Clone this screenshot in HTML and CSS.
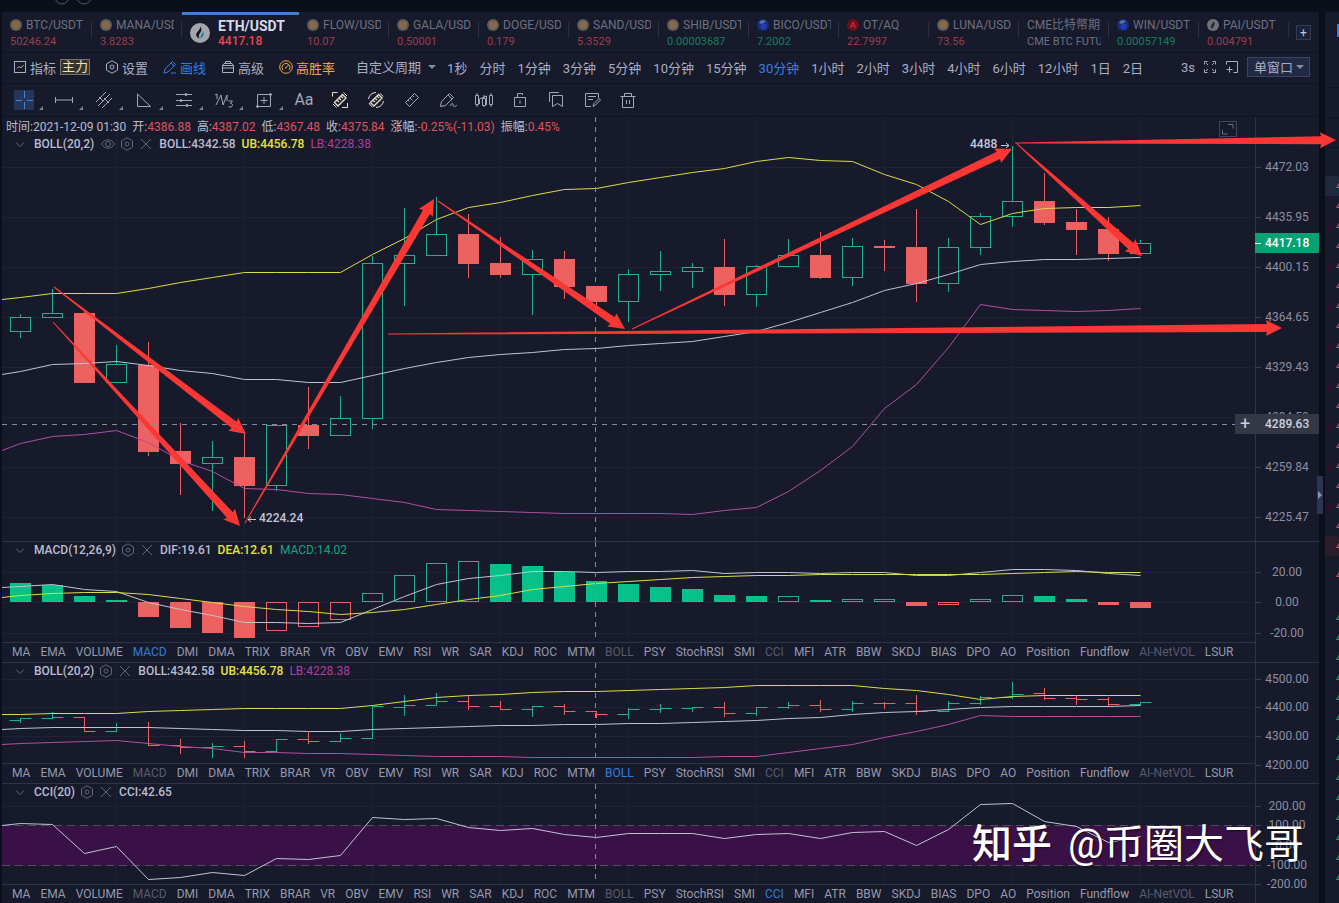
FILE: index.html
```html
<!DOCTYPE html>
<html lang="zh-CN">

<head>
    <meta charset="UTF-8">
    <meta name="viewport" content="width=device-width, initial-scale=1.0">
    <title>ETH/USDT 4417.18</title>
    <link rel="stylesheet" href="styles.css">
</head>

<body>
    <header class="topbar">
        <svg width="200" height="12" fill="none" stroke="#555a6c">
            <circle cx="62" cy="-3" r="7" />
            <circle cx="84" cy="-3" r="7" />
        </svg>
    </header>

    <div class="workspace">
        <main class="panel">
            <nav class="symbols" id="symbols"></nav>

            <div class="toolbar">
                <button class="tool"><svg class="icon" viewBox="0 0 14 14">
                        <rect x="1.500" y="1.500" width="11" height="11" />
                        <path d="M4 8.500l2-2 2 1.500 2.500-3" />
                    </svg>指标<span class="badge">主力</span></button>
                <button class="tool"><svg class="icon" viewBox="0 0 14 14">
                        <path d="M7 .8l5.500 3.100v6.200L7 13.200 1.500 10.100V3.900z" />
                        <circle cx="7" cy="7" r="2" />
                    </svg>设置</button>
                <button class="tool active"><svg class="icon" viewBox="0 0 14 14">
                        <path d="M1 13l1-4 7.500-7.500 3 3L5 12zM8 3l3 3M8 13h5" />
                    </svg>画线</button>
                <button class="tool"><svg class="icon" viewBox="0 0 14 14">
                        <path d="M1.500 5.500h11v7h-11zM1.500 5.500l1.500-2h8l1.500 2M4.500 3.500v-2h5v2M1.500 8h11" />
                    </svg>高级</button>
                <button class="tool gold"><svg class="icon" viewBox="0 0 14 14">
                        <circle cx="7" cy="7" r="6.300" />
                        <path d="M4 10a4 4 0 1 1 6 0M6.500 8L9.500 5M6 8h1.500" />
                    </svg>高胜率</button>
                <label class="dropdown custom"><select aria-label="自定义周期">
                        <option>自定义周期</option>
                    </select></label>
                <div class="periods" id="periods"></div>
                <div class="tools-right">
                    <span class="delay">3s</span>
                    <button class="plain" aria-label="全屏"><svg class="icon" viewBox="0 0 14 14">
                            <path d="M1.500 4.500v-3h3M9.500 1.500h3v3M12.500 9.500v3h-3M4.500 12.500h-3v-3M3 3l2 2M11 3L9 5M11 11L9 9M3 11l2-2" />
                        </svg></button>
                    <button class="plain" aria-label="新窗口"><svg class="icon" viewBox="0 0 14 14">
                            <path d="M1.500 4.500v-3h11v11h-4M4.500 6.500v6M1.500 9.500h6" />
                        </svg></button>
                    <label class="dropdown window"><select aria-label="窗口">
                            <option>单窗口</option>
                        </select></label>
                </div>
            </div>

            <div class="draw-tools" id="drawTools"></div>

            <section class="pane main-pane" data-pane="main">
                <div class="plot">
                    <svg class="chart" height="424"></svg>
                    <div class="legend">
                        <div class="legend-row quote">
                            <span>时间:2021-12-09 01:30</span>
                            <span>开:<b>4386.88</b></span>
                            <span>高:<b>4387.02</b></span>
                            <span>低:<b>4367.48</b></span>
                            <span>收:<b>4375.84</b></span>
                            <span>涨幅:<b>-0.25%(-11.03)</b></span>
                            <span>振幅:<b>0.45%</b></span>
                        </div>
                        <div class="legend-row" data-name="BOLL(20,2)" data-eye="1">
                            <span>BOLL:4342.58</span><span class="ub">UB:4456.78</span><span class="lb">LB:4228.38</span>
                        </div>
                    </div>
                    <button class="expand" aria-label="展开"><svg class="icon" viewBox="0 0 18 16">
                            <path d="M.5 15.500V.5h17v15z" opacity=".5" />
                            <path d="M9 3.500h5v4M3.500 9v4h5" />
                        </svg></button>
                </div>
                <div class="axis"><svg height="424"></svg></div>
                <div class="cross-price"><button aria-label="添加">+</button><span>4289.63</span></div>
                <div class="last-price">4417.18</div>
            </section>

            <section class="pane" data-pane="macd" data-active="MACD">
                <div class="plot">
                    <svg class="chart" height="100"></svg>
                    <div class="legend">
                        <div class="legend-row" data-name="MACD(12,26,9)">
                            <span>DIF:19.61</span><span class="ub">DEA:12.61</span><span class="up">MACD:14.02</span>
                        </div>
                    </div>
                </div>
                <div class="axis"><svg height="120"></svg></div>
                <div class="indicators"></div>
            </section>

            <section class="pane" data-pane="boll" data-active="BOLL">
                <div class="plot">
                    <svg class="chart" height="100"></svg>
                    <div class="legend">
                        <div class="legend-row" data-name="BOLL(20,2)">
                            <span>BOLL:4342.58</span><span class="ub">UB:4456.78</span><span class="lb">LB:4228.38</span>
                        </div>
                    </div>
                </div>
                <div class="axis"><svg height="120"></svg></div>
                <div class="indicators"></div>
            </section>

            <section class="pane" data-pane="cci" data-active="CCI">
                <div class="plot">
                    <svg class="chart" height="100"></svg>
                    <div class="legend">
                        <div class="legend-row" data-name="CCI(20)"><span>CCI:42.65</span></div>
                    </div>
                </div>
                <div class="axis"><svg height="120"></svg></div>
                <div class="indicators"></div>
            </section>
        </main>

        <aside class="book">
            <div class="book-head"><i></i></div>
            <div class="book-row"></div>
            <div class="book-row"></div>
            <ul id="book"></ul>
        </aside>

        <button class="handle" aria-label="收起"></button>
        <svg class="arrows" id="arrows"></svg>
        <div class="watermark"><strong>知乎</strong><span>@币圈大飞哥</span></div>
    </div>

    <script src="chart.js"></script>
</body>

</html>
```

FILE: styles.css
```css
* {
    box-sizing: border-box;
}

body {
    margin: 0;
    height: 100vh;
    overflow: hidden;
    background: #0b0f1a;
    color: #c3c7da;
    font-family: Roboto, "Noto Sans CJK SC", sans-serif;
    font-size: 12px;
}

button,
select {
    margin: 0;
    padding: 0;
    border: none;
    background: none;
    color: inherit;
    font: inherit;
    cursor: pointer;
}

svg {
    display: block;
}

.icon {
    width: 14px;
    height: 14px;
    fill: none;
    stroke: currentColor;
    stroke-width: 1;
}

.topbar {
    height: 12px;
    overflow: hidden;
}

.workspace {
    position: relative;
    display: grid;
    grid-template-columns: minmax(0, 1fr) 14px;
    column-gap: 6px;
    padding-left: 2px;
    overflow: hidden;
    height: calc(100vh - 12px);
}

.panel,
.book {
    background: #171a2b;
    min-width: 0;
}

/* symbols */
.symbols {
    display: flex;
    height: 41px;
    border-bottom: 1px solid #0f1220;
}

.symbol {
    position: relative;
    width: 90px;
    padding: 5px 8px 0;
    color: #6d7080;
    text-decoration: none;
}

.symbol::after {
    content: "";
    position: absolute;
    right: 0;
    top: 10px;
    width: 1px;
    height: 16px;
    background: #2c3042;
}

.symbol-name {
    display: flex;
    align-items: center;
    gap: 4px;
    height: 16px;
    line-height: 16px;
    overflow: hidden;
    white-space: nowrap;
}

.symbol-name svg {
    flex: none;
}

.symbol-name span {
    overflow: hidden;
}

.symbol-price {
    font-size: 11px;
    line-height: 18px;
    color: #9b3f4b;
    overflow: hidden;
    white-space: nowrap;
}

.symbol-price.green {
    color: #15805f;
}

.symbol-price.gray {
    color: #6d7080;
}

.symbol.current {
    display: flex;
    align-items: center;
    gap: 8px;
    width: 117px;
    padding: 0 8px 2px;
    border-top: 3px solid #3f7fd0;
    color: #d5d9ea;
}

.symbol.current::after {
    display: none;
}

.symbol.current .symbol-name {
    font-size: 14px;
    font-weight: 700;
}

.symbol.current .symbol-price {
    font-size: 12px;
    line-height: 14px;
    font-weight: 500;
    color: #f0444f;
}

.add-symbol {
    width: 15px;
    height: 15px;
    margin: 13px 0 0 7px;
    border: 1px solid #343b54;
    background: #1b2136;
    line-height: 12px;
}

/* toolbar */
.toolbar {
    display: flex;
    align-items: center;
    gap: 15px;
    height: 31px;
    padding: 0 9px 2px 11px;
    border-bottom: 1px solid #0f1220;
    font-size: 13px;
    white-space: nowrap;
    color: #a9aec4;
}

.tool {
    display: flex;
    align-items: center;
    gap: 3px;
}

.tool.active,
.periods .active {
    color: #2f7fe6;
}

.tool.gold {
    color: #f0a63c;
}

.badge {
    height: 16px;
    margin-left: 1px;
    padding: 0 1px;
    border: 1px solid #77736c;
    background: #37342f;
    color: #f2e0bd;
    line-height: 13px;
}

.dropdown {
    display: flex;
    align-items: center;
    gap: 6px;
    margin-left: 6px;
}

.dropdown select {
    appearance: none;
}

.dropdown::after {
    content: "";
    border: 4px solid transparent;
    border-top-color: #868ca3;
    border-bottom: none;
}

.periods {
    display: flex;
    gap: 12px;
    margin-left: -4px;
}

.tools-right {
    display: flex;
    align-items: center;
    gap: 8px;
    margin-left: auto;
}

.dropdown.window {
    gap: 2px;
    height: 20px;
    margin: 0;
    padding: 0 5px 0 6px;
    border: 1px solid #3b4360;
    background: #222944;
}

/* drawing tools */
.draw-tools {
    display: flex;
    align-items: center;
    gap: 16px;
    height: 33px;
    padding-left: 12px;
    border-bottom: 1px solid #0f1220;
    color: #a3a7ba;
}

.draw-tools button {
    position: relative;
    width: 20px;
    height: 20px;
    font-size: 16px;
    line-height: 20px;
}

.draw-tools svg {
    width: 20px;
    height: 20px;
}

.draw-tools .has-menu {
    margin-right: 4px;
}

.draw-tools .has-menu::after {
    content: "";
    position: absolute;
    left: 25px;
    bottom: 0;
    border: 2px solid transparent;
    border-right-color: #7d8194;
    border-bottom-color: #7d8194;
}

.draw-tools .active {
    background: #26355a;
    color: #3f82e0;
}

.draw-tools .gold {
    color: #eadfca;
}

/* chart panes */
.pane {
    position: relative;
    display: grid;
    grid-template-columns: minmax(0, 1fr) 64px;
    border-top: 1px solid #2f3347;
}

.main-pane {
    border-top: none;
}

.plot {
    position: relative;
    min-width: 0;
}

.chart {
    width: 100%;
}

.axis {
    grid-row: span 2;
    border-left: 1px solid #2f3347;
    overflow: hidden;
}

.main-pane .axis {
    grid-row: auto;
}

.axis svg {
    width: 100%;
}

.axis text {
    fill: #8b8fa3;
    text-anchor: middle;
}

.legend {
    position: absolute;
    left: 0;
    top: -1px;
}

.main-pane .legend {
    top: 0;
}

.legend-row {
    display: flex;
    align-items: center;
    gap: 5px;
    height: 18px;
    padding-left: 12px;
    font-weight: 500;
    white-space: nowrap;
    color: #b9bdd1;
}

.legend-row.quote {
    gap: 6px;
    padding: 0 0 2px 4px;
    font-weight: 400;
}

.legend-row b {
    font-weight: 400;
    color: #e0525e;
}

.legend-row .icon {
    color: #626679;
}

.legend-row .eye {
    margin-left: 2px;
}

.legend-row .name {
    margin-left: 1px;
}

.legend-row .close {
    margin-right: 1px;
}

.legend-row .ub,
.legend-row .lb,
.legend-row .up {
    margin-left: 1px;
}

.ub {
    color: #e6e33f;
}

.lb {
    font-weight: 400;
    color: #b13fa0;
}

.up {
    font-weight: 400;
    color: #17a57a;
}

.expand {
    position: absolute;
    right: 18px;
    top: 4px;
    width: 18px;
    height: 16px;
    color: #6b7084;
}

.expand .icon {
    width: 18px;
    height: 16px;
}

.indicators {
    display: flex;
    gap: 10px;
    height: 20px;
    padding: 0 0 2px 10px;
    border-top: 1px solid #2f3347;
    overflow: hidden;
    white-space: nowrap;
    color: #9499ac;
}

.indicators .used {
    color: #585c6d;
}

.indicators .active {
    color: #2f7ddb;
}

.cross-price,
.last-price {
    position: absolute;
    right: 0;
    height: 20px;
    line-height: 20px;
    font-weight: 500;
}

.cross-price {
    top: 297px;
    display: flex;
    width: 84px;
    gap: 14px;
    padding-left: 4px;
    background: #343845;
    color: #ccd0e0;
}

.cross-price button {
    width: 12px;
    font-size: 18px;
    font-weight: 400;
    line-height: 18px;
}

.last-price {
    top: 116px;
    width: 64px;
    padding-left: 10px;
    background: #08a173;
    color: #fff;
}

.last-price::before {
    content: "";
    position: absolute;
    left: 0;
    top: 10px;
    width: 6px;
    height: 1px;
    background: #fff;
}

/* order book */
.book {
    overflow: hidden;
}

.book-head {
    height: 76px;
    padding: 12px 0 0 12px;
    border-bottom: 1px solid #0f1220;
}

.book-head i {
    display: block;
    height: 13px;
    background: #2f7fe6;
}

.book-row {
    height: 30px;
    border-bottom: 1px solid #0f1220;
}

.book ul {
    margin: 28px 0 0;
    padding: 0;
    list-style: none;
}

.book li {
    height: 20px;
    padding-left: 11px;
    line-height: 20px;
    color: #e0525e;
}

.book li.buy {
    color: #17a57a;
}

.book li.hover {
    background: #20283d;
}

.book li.deal {
    margin-bottom: 9px;
    background: #2c1d2b;
}

.book li.last {
    margin-bottom: 23px;
}

/* overlays */
.handle {
    position: absolute;
    right: 16px;
    top: 464px;
    width: 6px;
    height: 38px;
    background: #2c3550;
}

.handle::after {
    content: "";
    position: absolute;
    left: 1px;
    top: 15px;
    border: 4px solid transparent;
    border-left-color: #8b93ad;
    border-right: none;
}

.arrows {
    position: absolute;
    left: 0;
    top: 0;
    width: 100%;
    height: 100%;
    fill: #fa3735;
    pointer-events: none;
}

.watermark {
    position: absolute;
    right: 35px;
    bottom: 30px;
    display: flex;
    gap: 16px;
    font-size: 40px;
    line-height: 56px;
    color: #fff;
    text-shadow: 1px 1px 2px rgba(0, 0, 0, 0.5);
    pointer-events: none;
}

.watermark strong {
    font-weight: 500;
}
```

FILE: chart.js
```js
const $ = (s, root = document) => root.querySelector(s)

// ---------- symbol tabs ----------
const symbols = [
    ["BTC/USDT", "50246.24", "coin"],
    ["MANA/USDT", "3.8283", "coin"],
    ["ETH/USDT", "4417.18", "eth"],
    ["FLOW/USDT", "10.07", "coin"],
    ["GALA/USDT", "0.50001", "coin"],
    ["DOGE/USDT", "0.179", "coin"],
    ["SAND/USDT", "5.3529", "coin"],
    ["SHIB/USDT", "0.00003687", "coin", "green"],
    ["BICO/USDT", "7.2002", "blue", "green"],
    ["OT/AQ", "22.7997", "red"],
    ["LUNA/USDT", "73.56", "coin"],
    ["CME比特幣期貨", "CME BTC FUTURES", "", "gray"],
    ["WIN/USDT", "0.00057149", "blue", "green"],
    ["PAI/USDT", "0.004791", "gray"]
]

const logos = {
    coin: '<circle cx="6" cy="6" r="6" fill="#5f5b5a"/><circle cx="6" cy="6" r="4" fill="#85694a"/>',
    blue: '<circle cx="6" cy="6" r="6" fill="#1b2c7c"/><path d="M2 3.500a5 5 0 0 1 7-1.500L7 4 4 5z" fill="#50789a"/><circle cx="6.500" cy="7.500" r="3" fill="#1f3fc0"/>',
    red: '<circle cx="6" cy="6" r="6" fill="#6e0f1c"/><path d="M3.500 9L6 3l2.500 6M4.500 7h3" stroke="#c9343f" fill="none"/>',
    gray: '<circle cx="6" cy="6" r="6" fill="#6f7276"/><path d="M6 2c2 2 2 3 1 5s-2 2-2 3c-2-2-1-4 0-5s1-2 1-3z" fill="#24283a"/>'
}

const ethLogo = `<svg width="20" height="20"><circle cx="10" cy="10" r="10" fill="#a3a5a8"/>
<path d="M10 3.500c2.500 2.500 1.500 4.500 0 6.500s-1.500 3.500-.5 5.500C6 14 5.500 11.500 7 9.500s3.500-3.500 3-6z" fill="#14161f"/>
<path d="M13 8c1.500 3 .5 6-2.500 7.500-.5-3 2-4 2.500-7.500z" fill="#2173a8"/></svg>`

$("#symbols").innerHTML = symbols.map(([name, price, logo, tone = ""]) => {
    if (logo == "eth") {
        return `<a href="#" class="symbol current">${ethLogo}<div><div class="symbol-name">${name}</div><div class="symbol-price">${price}</div></div></a>`
    }
    const icon = logo ? `<svg width="12" height="12">${logos[logo]}</svg>` : ""
    return `<a href="#" class="symbol"><div class="symbol-name">${icon}<span>${name}</span></div><div class="symbol-price ${tone == "green" || !logo ? tone : ""}">${price}</div></a>`
}).join("") + '<button class="add-symbol" aria-label="添加">+</button>'

// ---------- periods ----------
const periods = "1秒 分时 1分钟 3分钟 5分钟 10分钟 15分钟 30分钟 1小时 2小时 3小时 4小时 6小时 12小时 1日 2日".split(" ")
$("#periods").innerHTML = periods.map(p => `<button class="${p == "30分钟" ? "active" : ""}">${p}</button>`).join("")

// ---------- drawing tools ----------
const ruler = '<path d="M3.500 12.500l9-9 4 4-9 9zM6 10l1.500 1.500M8 8l2.500 2.500M10.500 5.500L12 7"/>'
const drawTools = [
    ["十字光标", "active has-menu", '<path d="M10.500 1v7M10.500 12v7M2 10.500h6M13 10.500h6"/>'],
    ["线段", "has-menu", '<path d="M1.500 7v6M18.500 7v6M1.500 10h17"/>'],
    ["平行线", "has-menu", '<path d="M2 12L12 2M4 16L16 4M8 18L18 8M5 7l4 4M10 8l5 5"/>'],
    ["三角形", "has-menu", '<path d="M3.500 4v12.500h13z"/>'],
    ["斐波那契", "has-menu", '<path d="M2 4.500h16M2 10.500h16M2 15.500h16"/><circle cx="12" cy="4.500" r="1" fill="currentColor"/><circle cx="7" cy="10.500" r="1" fill="currentColor"/><circle cx="13" cy="15.500" r="1" fill="currentColor"/>'],
    ["波浪", "has-menu", '<path d="M1 5l2-1v5M2 15L7 5l2 10 4-10v6M14.500 11h4l-2 2.500c3 0 2.500 3.500-.5 3.500h-1.500"/>'],
    ["矩形", "has-menu", '<path d="M3.500 4.500h13v12h-13zM10 7v7M6.500 10.500h7"/><circle cx="3.500" cy="16.500" r="1" fill="currentColor"/><circle cx="16.500" cy="4.500" r="1" fill="currentColor"/>'],
    ["文字", "", "Aa"],
    ["区间测量", "gold", '<path d="M4.500 12.500l8-8 3.500 3.500-8 8zM7 10l2 2M9 8l2 2M11 6l2 2" stroke-width="1.400"/><path d="M2.500 6.500v-4h5M17.500 13v4.500H12M3 14l3.500 3.500M13.500 2.500L17 6"/>'],
    ["周期测量", "gold", '<path d="M4.500 12.500l8-8 3.500 3.500-8 8zM7 10l2 2M9 8l2 2M11 6l2 2" stroke-width="1.400"/><path d="M2.500 9A8 8 0 0 1 10 2.500M17.500 11A8 8 0 0 1 10 17.500M14 3.500a8 8 0 0 1 3 3M3 13a8 8 0 0 0 3.500 4"/>'],
    ["测量", "", ruler],
    ["画笔", "", '<path d="M2.500 16.500l1-5 8-8 4 4-8 8zM10 5l4 4M12 16c2-4 3-3 3-1s2 2 4 0"/>'],
    ["形态", "", '<path d="M1.500 5.500h3v9h-3zM8.500 8.500h3v7h-3zM15.500 5.500h3v9h-3zM3 3v2.500M3 14.500V17M10 5v3.500M10 15.500V17M17 3v2.500M17 14.500V17M5.500 14V9l7-3v9"/>'],
    ["锁定", "", '<path d="M4.500 7.500h11v9h-11zM7.500 7.500v-4h5v1.500M10 10.500v3"/>'],
    ["书签", "", '<path d="M6.500 5.500h10v11l-5-3-5 3zM3.500 12V2.500H13"/>'],
    ["备注", "", '<path d="M16.500 8V3.500h-13v13H9M6 6.500h8M6 9.500h5M11 16.500l1-3 5-5 1.500 1.500-5 5z"/>'],
    ["删除", "", '<path d="M2.500 6.500h15M6.500 6.500v-3h7v3M4.500 6.500v11h11v-11M8.500 10v4M11.500 10v4"/>']
]
$("#drawTools").innerHTML = drawTools.map(([label, cls, art]) =>
    `<button class="${cls}" aria-label="${label}">${art == "Aa" ? art : `<svg class="icon" viewBox="0 0 20 20">${art}</svg>`}</button>`
).join("")

// ---------- legends and indicator rows ----------
const eye = '<path d="M.5 7C4 1.500 10 1.500 13.500 7 10 12.500 4 12.500.5 7z"/><circle cx="7" cy="7" r="2.500"/>'
const gear = '<path d="M7 .8l5.500 3.100v6.200L7 13.200 1.500 10.100V3.900z"/><circle cx="7" cy="7" r="2"/>'
const icon = (art, cls = "") => `<svg class="icon ${cls}" viewBox="0 0 14 14">${art}</svg>`

document.querySelectorAll(".legend-row[data-name]").forEach(row => {
    row.insertAdjacentHTML("afterbegin",
        icon('<path d="M2 5.500l4 4 4-4"/>') + `<span class="name">${row.dataset.name}</span>` +
        (row.dataset.eye ? icon(eye, "eye") : "") + icon(gear) + icon('<path d="M2 2l10 10M12 2L2 12"/>', "close"))
})

const indicators = "MA EMA VOLUME MACD DMI DMA TRIX BRAR VR OBV EMV RSI WR SAR KDJ ROC MTM BOLL PSY StochRSI SMI CCI MFI ATR BBW SKDJ BIAS DPO AO Position Fundflow AI-NetVOL LSUR".split(" ")
const used = ["MACD", "BOLL", "CCI", "AI-NetVOL"]
document.querySelectorAll(".indicators").forEach(box => {
    const active = box.parentNode.dataset.active
    box.innerHTML = indicators.map(n =>
        `<button class="${n == active ? "active" : used.includes(n) && !(n == "MACD" && active == "MACD") ? "used" : ""}">${n}</button>`).join("")
})

// ---------- series ----------
const UP = "#22b18b", DOWN = "#ee6161"
const YELLOW = "#dedb45", WHITE = "#bfc3d8", PINK = "#b24da2"

// top, bottom, high, low, direction
const candles = [
    [317, 332, 314, 338, 1], [313, 318, 289, 318, 1], [313, 383, 310, 383, 0], [364, 383, 345, 383, 1],
    [365, 452, 342, 456, 0], [451, 464, 423, 495, 0], [457, 464, 441, 511, 1], [457, 486, 433, 518, 0],
    [425, 486, 424, 491, 1], [425, 436, 387, 449, 0], [418, 436, 396, 436, 1], [263, 419, 256, 429, 1],
    [255, 264, 208, 306, 1], [234, 256, 197, 256, 1], [234, 264, 214, 278, 0], [263, 275, 237, 278, 0],
    [259, 275, 250, 315, 1], [259, 287, 251, 299, 0], [286, 302, 286, 306, 0], [274, 302, 269, 322, 1],
    [271, 275, 251, 291, 1], [267, 272, 263, 288, 1], [267, 295, 239, 306, 0], [266, 295, 265, 307, 1],
    [255, 267, 239, 267, 1], [255, 278, 232, 279, 0], [246, 278, 238, 286, 1], [246, 248, 240, 271, 0],
    [247, 284, 209, 302, 0], [247, 284, 238, 292, 1], [216, 248, 213, 255, 1], [201, 217, 146, 227, 1],
    [201, 223, 173, 225, 0], [222, 230, 209, 255, 0], [229, 254, 217, 261, 0], [243, 254, 240, 254, 1]
]

// each line starts with its value at the left edge
const mainLines = [
    [YELLOW, [299, 297, 293, 293, 293, 288, 282, 277, 272, 272, 272, 272, 254, 238, 219, 207, 202, 195, 189, 188, 182, 177, 172, 168, 161, 157, 160, 161, 174, 184, 201, 224, 213, 208, 207, 207, 205]],
    [WHITE, [374, 371, 364, 363, 361, 365, 370, 373, 379, 379, 382, 382, 375, 368, 362, 357, 354, 352, 349, 348, 345, 343, 341, 336, 331, 322, 312, 302, 290, 283, 274, 264, 261, 259, 259, 258, 257]],
    [PINK, [450, 443, 436, 434, 430, 442, 460, 471, 488, 489, 493, 494, 498, 502, 509, 510, 511, 512, 513, 513, 513, 513, 514, 510, 507, 491, 470, 446, 408, 384, 347, 304, 309, 310, 311, 310, 308]]
]

// value, filled
const macd = [
    [583, 1], [585, 1], [596, 1], [600, 1], [617, 1], [628, 1], [633, 1], [638, 1], [631, 0], [627, 0], [620, 0], [593, 0],
    [575, 0], [563, 0], [561, 0], [564, 1], [566, 1], [572, 1], [581, 1], [584, 1], [587, 1], [589, 1], [595, 1], [596, 1],
    [596, 0], [600, 1], [599, 0], [599, 0], [606, 1], [605, 0], [599, 0], [595, 0], [596, 1], [599, 1], [605, 1], [608, 1]
]
const macdLines = [
    [WHITE, [587, 586, 584, 589, 591, 602, 609, 615, 622, 622, 623, 622, 609, 596, 584, 578, 575, 571, 571, 572, 571, 571, 570, 573, 572, 572, 573, 572, 572, 575, 575, 572, 569, 569, 570, 573, 575]],
    [YELLOW, [597, 595, 593, 592, 592, 594, 598, 602, 606, 609, 611, 614, 612, 609, 604, 599, 595, 589, 586, 583, 581, 579, 577, 576, 575, 575, 574, 574, 574, 574, 574, 574, 573, 572, 571, 572, 572]]
]

// open, close, high, low, direction
const bars = [
    [720, 718, 718, 722, 1], [718, 717, 712, 718, 1], [717, 731, 717, 731, 0], [731, 727, 723, 731, 1],
    [727, 745, 722, 745, 0], [745, 747, 739, 753, 0], [747, 746, 743, 757, 1], [746, 751, 741, 757, 0],
    [751, 739, 739, 751, 1], [739, 741, 732, 743, 0], [741, 738, 733, 741, 1], [738, 706, 706, 738, 1],
    [707, 705, 695, 715, 1], [705, 701, 693, 705, 1], [701, 706, 696, 709, 0], [706, 709, 701, 709, 0],
    [709, 706, 706, 716, 1], [706, 711, 704, 714, 0], [711, 714, 711, 717, 0], [714, 709, 708, 718, 1],
    [709, 708, 704, 712, 1], [708, 707, 707, 711, 1], [707, 713, 702, 716, 0], [713, 707, 707, 715, 1],
    [707, 705, 702, 708, 1], [705, 709, 700, 711, 0], [709, 703, 701, 711, 1], [703, 703, 702, 708, 0],
    [703, 711, 695, 714, 0], [711, 703, 701, 711, 1], [703, 697, 696, 704, 1], [697, 694, 682, 698, 1],
    [693, 698, 688, 699, 0], [698, 699, 696, 704, 0], [699, 704, 697, 706, 0], [704, 702, 702, 705, 1]
]
const bollLines = [
    [YELLOW, [714, 714, 713, 713, 713, 711, 710, 709, 708, 708, 708, 708, 705, 701, 697, 695, 694, 692, 691, 691, 690, 689, 688, 687, 685, 685, 685, 685, 688, 690, 694, 699, 696, 695, 695, 695, 695]],
    [WHITE, [729, 728, 727, 727, 727, 727, 728, 729, 730, 730, 731, 731, 729, 728, 727, 726, 725, 725, 724, 724, 723, 723, 722, 721, 720, 718, 717, 714, 712, 711, 709, 707, 706, 706, 706, 706, 705]],
    [PINK, [744, 743, 742, 741, 740, 743, 746, 748, 752, 752, 753, 753, 754, 755, 756, 756, 756, 757, 757, 757, 757, 757, 757, 756, 756, 752, 748, 744, 737, 731, 724, 715, 716, 716, 716, 716, 716]]
]
const cciLines = [
    [WHITE, [825, 823, 824, 853, 846, 879, 877, 872, 875, 858, 859, 855, 817, 819, 818, 827, 830, 828, 834, 837, 833, 833, 833, 838, 834, 833, 838, 832, 831, 845, 829, 804, 803, 821, 826, 842, 836]]
]

// ---------- drawing helpers ----------
const X = i => 20.5 + i * 32

const line = (x1, y1, x2, y2, color, extra = "") =>
    `<line x1="${x1}" y1="${y1}" x2="${x2}" y2="${y2}" stroke="${color}" ${extra}/>`

const box = (x, top, bottom, color, filled) => filled
    ? `<rect x="${x - 10.5}" y="${top}" width="21" height="${bottom - top}" fill="${color}"/>`
    : `<rect x="${x - 10}" y="${top + .5}" width="20" height="${bottom - top - 1}" fill="none" stroke="${color}"/>`

const curves = list => list.map(([color, values]) => {
    const points = values.map((v, i) => `${i ? X(i - 1) : 2},${v + .5}`).join(" ")
    return `<polyline points="${points}" fill="none" stroke="${color}"/>`
}).join("")

function grid(rows, top, bottom) {
    let out = rows.map(y => line(2, y + .5, "100%", y + .5, "#1e2234")).join("")
    for (let i = 3; i < 36; i += 4) out += line(X(i), top, X(i), bottom, "#1e2234")
    return out
}

const crosshair = (top, bottom) => line(595.5, top, 595.5, bottom, "#868a9c", 'stroke-dasharray="5 5"')

const drawCandles = () => candles.map(([t, b, h, l, up], i) => {
    const c = up ? UP : DOWN
    return line(X(i), h, X(i), t, c) + line(X(i), b, X(i), l, c) + box(X(i), t, b, c, !up)
}).join("")

const drawMacd = () => macd.map(([v, filled], i) =>
    v < 602 ? box(X(i), v, 602, filled ? "#06c188" : UP, filled) : box(X(i), 602, v, DOWN, filled)
).join("")

const drawBars = () => bars.map(([o, c, h, l, up], i) => {
    const color = up ? UP : DOWN
    return line(X(i), h, X(i), l + 1, color) +
        line(X(i) - 11, o + .5, X(i), o + .5, color) + line(X(i), c + .5, X(i) + 11, c + .5, color)
}).join("")

// ---------- panes ----------
const panes = {
    main: {
        top: 117, height: 424,
        axis: [[167, "4472.03"], [217, "4435.95"], [267, "4400.15"], [317, "4364.65"], [367, "4329.43"], [417, "4294.50"], [467, "4259.84"], [517, "4225.47"]],
        draw: () => drawCandles() + curves(mainLines) +
            line(2, 424.5, "100%", 424.5, "#868a9c", 'stroke-dasharray="5 5"') +
            '<g fill="#c3c7da" font-weight="500"><text x="970" y="148">4488</text><text x="259" y="522">4224.24</text></g>' +
            '<path d="M1001 145.500h8M1006 143l3 2.500-3 2.500M256 519.500h-8M251 517l-3 2.500 3 2.500" fill="none" stroke="#c3c7da"/>'
    },
    macd: {
        top: 542, height: 100,
        axis: [[572, "20.00"], [602, "0.00"], [633, "-20.00"]],
        draw: () => drawMacd() + curves(macdLines)
    },
    boll: {
        top: 663, height: 100,
        axis: [[679, "4500.00"], [707, "4400.00"], [736, "4300.00"], [765, "4200.00"]],
        draw: () => drawBars() + curves(bollLines)
    },
    cci: {
        top: 784, height: 100,
        axis: [[806, "200.00"], [825, "100.00"], [845, "0.00"], [865, "-100.00"], [884, "-200.00"]],
        draw: () => '<rect x="2" y="826" width="100%" height="39" fill="#391146"/>' +
            line(2, 825.5, "100%", 825.5, "#54505f", 'stroke-dasharray="8 5"') +
            line(2, 865.5, "100%", 865.5, "#54505f", 'stroke-dasharray="8 5"') + curves(cciLines)
    }
}

document.querySelectorAll(".pane").forEach(el => {
    const p = panes[el.dataset.pane]
    $(".chart", el).innerHTML = `<g transform="translate(-2 ${-p.top})">` +
        grid(p.axis.map(a => a[0]), p.top, p.top + p.height) + p.draw() + crosshair(p.top, p.top + p.height) + "</g>"
    $(".axis svg", el).innerHTML = `<g transform="translate(0 ${-p.top})">` + p.axis.map(([y, label]) =>
        line(0, y + .5, 5, y + .5, "#3a3e50") + `<text x="31" y="${y + 4}">${label}</text>`).join("") + "</g>"
})

// ---------- order book ----------
let rows = ""
for (let i = 0; i < 34; i++) {
    const cls = i == 0 ? "hover" : i == 18 ? "deal" : i == 19 ? "last" : i > 19 ? "buy" : ""
    rows += `<li class="${cls}">4</li>`
}
$("#book").innerHTML = rows

// ---------- trend arrows ----------
// tail x, tail y, tip x, tip y
const arrows = [
    [54, 287, 246, 434], [53, 322, 240, 526], [245, 523, 434, 199], [438, 201, 625, 329],
    [632, 329, 1012, 149], [1016, 143, 1142, 256], [388, 334, 1282, 328], [1015, 143, 1336, 140]
]
const HEAD = 16, WING = 8, BODY = 4
$("#arrows").innerHTML = '<g transform="translate(0 -12)">' + arrows.map(([x1, y1, x2, y2]) => {
    const len = Math.hypot(x2 - x1, y2 - y1)
    const ux = (x2 - x1) / len, uy = (y2 - y1) / len
    const at = (back, side) => `${x2 - ux * back - uy * side},${y2 - uy * back + ux * side}`
    return `<polygon points="${[at(len, .5), at(HEAD - 1, BODY), at(HEAD, WING), at(0, 0), at(HEAD, -WING), at(HEAD - 1, -BODY), at(len, -.5)].join(" ")}"/>`
}).join("") + "</g>"
```
